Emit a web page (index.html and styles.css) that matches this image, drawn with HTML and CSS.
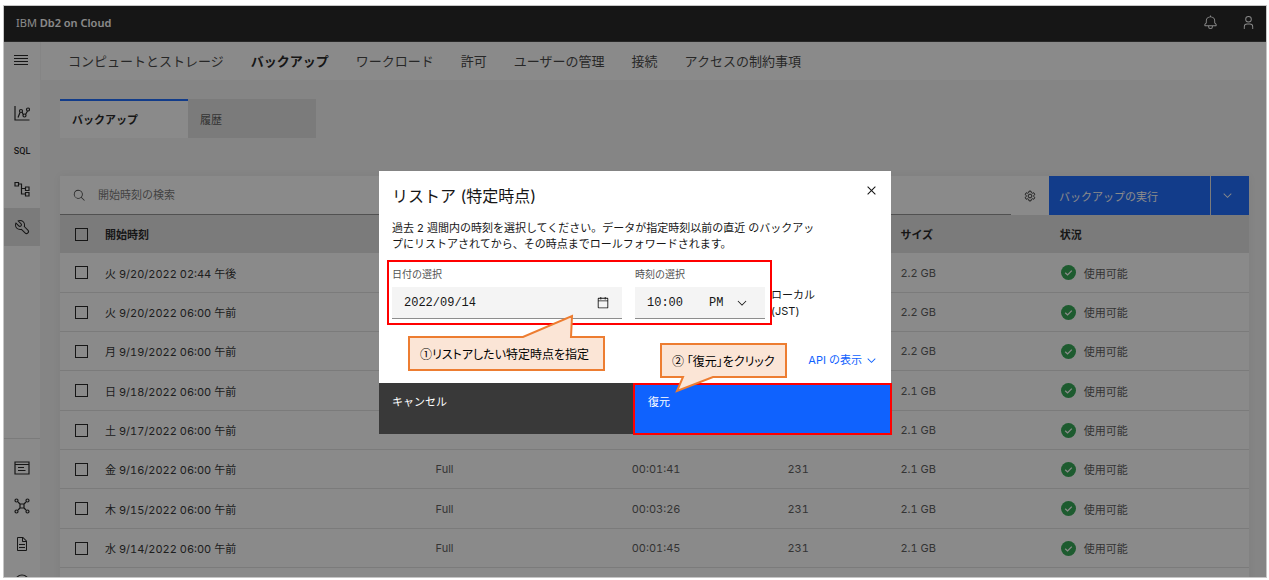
FILE: index.html
```html
<!DOCTYPE html>
<html lang="ja">
<head>
    <title>IBM Db2 on Cloud</title>
    <meta charset="utf-8">
    <link rel="stylesheet" href="styles.css">
</head>
<body>
    <div class="app">
        <header class="header">
            <div class="brand">IBM <b>Db2 on Cloud</b></div>
            <button class="header-btn" aria-label="通知">
                <svg viewBox="0 0 32 32"><path d="M28.7 19.3 26 16.6V13a10 10 0 0 0-9-9.95V1h-2v2.05A10 10 0 0 0 6 13v3.6l-2.7 2.7A1 1 0 0 0 3 20v3a1 1 0 0 0 1 1h7v.8a5.15 5.15 0 0 0 4.5 5.2A5 5 0 0 0 21 25v-1h7a1 1 0 0 0 1-1v-3a1 1 0 0 0-.3-.7zM19 25a3 3 0 0 1-6 0v-1h6zm8-3H5v-1.6l2.7-2.7A1 1 0 0 0 8 17v-4a8 8 0 0 1 16 0v4a1 1 0 0 0 .3.7l2.7 2.7z"/></svg>
            </button>
            <button class="header-btn" aria-label="ユーザー">
                <svg viewBox="0 0 32 32"><path d="M16 4a5 5 0 1 1-5 5 5 5 0 0 1 5-5m0-2a7 7 0 1 0 7 7 7 7 0 0 0-7-7zM26 30h-2v-5a5 5 0 0 0-5-5h-6a5 5 0 0 0-5 5v5H6v-5a7 7 0 0 1 7-7h6a7 7 0 0 1 7 7z"/></svg>
            </button>
        </header>

        <div class="body">
            <nav class="sidebar">
                <button class="menu-btn" aria-label="メニュー">
                    <svg viewBox="0 0 14 14"><path d="M0 1h14v1H0zM0 4h14v1H0zM0 7h14v1H0zM0 10h14v1H0z"/></svg>
                </button>
                <div class="side-group">
                    <a href="#" class="side-item" aria-label="モニター">
                        <svg class="line" viewBox="0 0 32 32"><path d="M2 2v28h29M8 25l4-10M16 14l3 6M23 19l4-7"/><circle cx="14" cy="12" r="3"/><circle cx="21" cy="21" r="3"/><circle cx="28" cy="9" r="3"/></svg>
                    </a>
                    <a href="#" class="side-item sql">SQL</a>
                    <a href="#" class="side-item" aria-label="データ">
                        <svg class="line" viewBox="0 0 32 32"><path d="M2 3h7v7H2zM9 6h6v20h8M15 15h8M23 12h7v7h-7zM23 23h7v7h-7z"/></svg>
                    </a>
                    <a href="#" class="side-item active" aria-label="管理">
                        <svg viewBox="0 0 32 32"><path d="M12.1 2a9.8 9.8 0 0 0-5.4 1.6l6.4 6.4a2.1 2.1 0 0 1 .2 3 2.1 2.1 0 0 1-3-.2L3.7 6.4A9.84 9.84 0 0 0 2 12.1a10.14 10.14 0 0 0 10.1 10.1 10.9 10.9 0 0 0 2.6-.3l6.7 6.7a5 5 0 0 0 7.1-7.1l-6.7-6.7a10.9 10.9 0 0 0 .3-2.6A10 10 0 0 0 12.1 2zm8 10.1a7.61 7.61 0 0 1-.3 2.1l-.3 1.1.8.8 6.7 6.7a2.88 2.88 0 0 1 .9 2.1A2.72 2.72 0 0 1 27 27a2.9 2.9 0 0 1-4.2 0l-6.7-6.7-.8-.8-1.1.3a7.61 7.61 0 0 1-2.1.3 8.27 8.27 0 0 1-5.7-2.3A7.63 7.63 0 0 1 4 12.1a8.33 8.33 0 0 1 .3-2.2l4.4 4.4a4.14 4.14 0 0 0 5.9.2 4.14 4.14 0 0 0-.2-5.9L10 4.2a6.45 6.45 0 0 1 2-.3 8.27 8.27 0 0 1 5.7 2.3 8.49 8.49 0 0 1 2.4 5.9z"/></svg>
                    </a>
                </div>
                <div class="side-group side-bottom">
                    <a href="#" class="side-item" aria-label="情報">
                        <svg class="line" viewBox="0 0 32 32"><path d="M2 4h28v24H2zM2 9h28M8 15h12M8 21h15"/></svg>
                    </a>
                    <a href="#" class="side-item" aria-label="接続">
                        <svg class="line" viewBox="0 0 32 32"><path d="M12 12h8v8h-8zM8 8l4 4M24 8l-4 4M8 24l4-4M24 24l-4-4"/><circle cx="5" cy="5" r="3"/><circle cx="27" cy="5" r="3"/><circle cx="5" cy="27" r="3"/><circle cx="27" cy="27" r="3"/></svg>
                    </a>
                    <a href="#" class="side-item" aria-label="資料">
                        <svg viewBox="0 0 32 32"><path d="m25.7 9.3-7-7A.9.9 0 0 0 18 2H8a2 2 0 0 0-2 2v24c0 1.1.9 2 2 2h16a2 2 0 0 0 2-2V10c0-.3-.1-.5-.3-.7zM18 4.4l5.6 5.6H18zM24 28H8V4h8v6c0 1.1.9 2 2 2h6zM10 22h12v2H10zM10 16h12v2H10z"/></svg>
                    </a>
                    <a href="#" class="side-item" aria-label="ヘルプ">
                        <svg class="line" viewBox="0 0 32 32"><circle cx="16" cy="16" r="14"/></svg>
                    </a>
                </div>
            </nav>

            <main class="main">
                <nav class="topnav">
                    <a href="#">コンピュートとストレージ</a>
                    <a href="#" class="current">バックアップ</a>
                    <a href="#">ワークロード</a>
                    <a href="#">許可</a>
                    <a href="#">ユーザーの管理</a>
                    <a href="#">接続</a>
                    <a href="#">アクセスの制約事項</a>
                </nav>
                <div class="content">
                    <div class="tabs">
                        <button class="tab selected">バックアップ</button>
                        <button class="tab">履歴</button>
                    </div>
                    <div class="panel">
                        <div class="toolbar">
                            <div class="search">
                                <svg viewBox="0 0 32 32"><path d="m29 27.6-7.55-7.57a11 11 0 1 0-1.42 1.42L27.6 29zM4 13a9 9 0 1 1 9 9 9 9 0 0 1-9-9z"/></svg>
                                <input type="text" placeholder="開始時刻の検索" aria-label="開始時刻の検索">
                            </div>
                            <button class="gear" aria-label="設定">
                                <svg class="line" viewBox="0 0 32 32"><path d="M13.3 3h5.4l.8 3.9 2.9 1.7 3.8-1.3 2.7 4.7-3 2.6v2.8l3 2.6-2.7 4.7-3.8-1.3-2.9 1.7-.8 3.9h-5.4l-.8-3.9-2.9-1.7-3.8 1.3L3.1 20l3-2.6v-2.8l-3-2.6 2.7-4.7 3.8 1.3 2.9-1.7z"/><circle cx="16" cy="16" r="5"/></svg>
                            </button>
                            <button class="run">バックアップの実行</button>
                            <button class="run-more" aria-label="その他">
                                <svg viewBox="0 0 32 32"><path d="M16 22 6 12l1.4-1.4 8.6 8.6 8.6-8.6L26 12z"/></svg>
                            </button>
                        </div>
                        <table class="backups">
                            <thead>
                                <tr>
                                    <th class="c-check"><input type="checkbox" aria-label="すべて選択"></th>
                                    <th class="c-start">開始時刻</th>
                                    <th class="c-type"></th>
                                    <th class="c-time"></th>
                                    <th class="c-id"></th>
                                    <th class="c-size">サイズ</th>
                                    <th>状況</th>
                                </tr>
                            </thead>
                            <tbody id="rows"></tbody>
                        </table>
                    </div>
                </div>
            </main>
        </div>

        <div class="overlay">
            <div class="modal" role="dialog" aria-labelledby="modalTitle">
                <div class="modal-body">
                    <div class="modal-head">
                        <h2 id="modalTitle">リストア (特定時点)</h2>
                        <button class="close" aria-label="閉じる">
                            <svg viewBox="0 0 32 32"><path d="M24 9.4 22.6 8 16 14.6 9.4 8 8 9.4l6.6 6.6L8 22.6 9.4 24l6.6-6.6 6.6 6.6 1.4-1.4-6.6-6.6z"/></svg>
                        </button>
                    </div>
                    <p class="desc">過去 2 週間内の時刻を選択してください。データが指定時刻以前の直近 のバックアッ<br>プにリストアされてから、その時点までロールフォワードされます。</p>
                    <div class="fields">
                        <div class="field date">
                            <label for="date">日付の選択</label>
                            <div class="box">
                                <input type="text" id="date" value="2022/09/14">
                                <svg viewBox="0 0 32 32"><path d="M26 4h-4V2h-2v2h-8V2h-2v2H6a2 2 0 0 0-2 2v20c0 1.1.9 2 2 2h20a2 2 0 0 0 2-2V6a2 2 0 0 0-2-2zm0 22H6V12h20zm0-16H6V6h4v2h2V6h8v2h2V6h4z"/></svg>
                            </div>
                        </div>
                        <div class="field time">
                            <label for="time">時刻の選択</label>
                            <div class="box">
                                <input type="text" id="time" value="10:00">
                                <select aria-label="AM/PM">
                                    <option>AM</option>
                                    <option selected>PM</option>
                                </select>
                                <svg viewBox="0 0 32 32"><path d="M16 22 6 12l1.4-1.4 8.6 8.6 8.6-8.6L26 12z"/></svg>
                            </div>
                        </div>
                        <div class="zone">ローカル<br>(JST)</div>
                    </div>
                    <a href="#" class="api">API の表示
                        <svg viewBox="0 0 32 32"><path d="M16 22 6 12l1.4-1.4 8.6 8.6 8.6-8.6L26 12z"/></svg>
                    </a>
                </div>
                <div class="modal-footer">
                    <button class="cancel">キャンセル</button>
                    <button class="restore">復元</button>
                </div>

                <!-- 手順の注釈 -->
                <div class="mark mark-fields"></div>
                <div class="mark mark-restore"></div>
                <div class="callout callout-1">
                    <svg viewBox="0 0 197 58"><path d="M1 23h114l49-21-1 21h33v33H1z"/></svg>
                    <span>①リストアしたい特定時点を指定</span>
                </div>
                <div class="callout callout-2">
                    <svg viewBox="0 0 127 52"><path d="M1 1h125v33H53L17 48l6-14H1z"/></svg>
                    <span>② 「復元」をクリック</span>
                </div>
            </div>
        </div>
    </div>

    <script>
        const rows = [
            ['火 9/20/2022 02:44 午後', '', '', '', '2.2 GB'],
            ['火 9/20/2022 06:00 午前', '', '', '', '2.2 GB'],
            ['月 9/19/2022 06:00 午前', '', '', '', '2.2 GB'],
            ['日 9/18/2022 06:00 午前', '', '', '', '2.1 GB'],
            ['土 9/17/2022 06:00 午前', '', '', '', '2.1 GB'],
            ['金 9/16/2022 06:00 午前', 'Full', '00:01:41', '231', '2.1 GB'],
            ['木 9/15/2022 06:00 午前', 'Full', '00:03:26', '231', '2.1 GB'],
            ['水 9/14/2022 06:00 午前', 'Full', '00:01:45', '231', '2.1 GB']
        ];
        const check = '<svg viewBox="0 0 16 16"><circle cx="8" cy="8" r="8"/><path d="M4.5 8.2 7 10.6l4.5-4.6"/></svg>';
        document.getElementById('rows').innerHTML = rows.map(r =>
            '<tr><td><input type="checkbox" aria-label="' + r[0] + '"></td>' +
            r.map(c => '<td>' + c + '</td>').join('') +
            '<td><div class="status">' + check + '使用可能</div></td></tr>'
        ).join('') + '<tr><td colspan="7"></td></tr>';
    </script>
</body>
</html>
```
FILE: styles.css
```css
* {
    box-sizing: border-box;
}
body {
    margin: 0;
    padding: 5px 2px 2px 3px;
    background: #fff;
    font-family: Inter, "Noto Sans CJK JP", sans-serif;
    font-size: 11px;
    color: #161616;
}
button, input, select {
    margin: 0;
    padding: 0;
    border: none;
    border-radius: 0;
    background: none;
    font: inherit;
    color: inherit;
    outline: none;
}
button {
    text-align: left;
    cursor: pointer;
}
a {
    color: inherit;
    text-decoration: none;
}
svg {
    display: block;
    width: 16px;
    height: 16px;
    fill: currentColor;
    flex-shrink: 0;
}
svg.line {
    fill: none;
    stroke: currentColor;
    stroke-width: 2.4;
}
.app {
    position: relative;
    display: flex;
    flex-direction: column;
    height: calc(100vh - 7px);
    border: 1px solid #c6c6c6;
    overflow: hidden;
}

/* ヘッダー */
.header {
    display: flex;
    align-items: center;
    flex: 0 0 36px;
    padding: 0 10px 2px 12px;
    background: #161616;
    border-bottom: 1px solid #393939;
    color: #fff;
}
.brand {
    flex: 1;
    font-family: "Noto Sans", sans-serif;
}
.brand b {
    font-weight: 600;
}
.header-btn {
    margin-left: 23px;
}
.header-btn svg {
    width: 15px;
    height: 15px;
}
.body {
    display: flex;
    flex: 1;
    min-height: 0;
}

/* サイドバー */
.sidebar {
    display: flex;
    flex-direction: column;
    flex: 0 0 37px;
    background: #fff;
    border-right: 1px solid #f4f4f4;
    color: #161616;
}
.menu-btn {
    display: flex;
    align-items: center;
    height: 38px;
    padding-left: 10px;
    margin-bottom: 14px;
}
.menu-btn svg {
    width: 14px;
    height: 14px;
}
.side-item {
    display: flex;
    align-items: center;
    justify-content: center;
    height: 38px;
}
.side-item svg {
    width: 16px;
    height: 16px;
}
.side-item.active {
    background: #e0e0e0;
}
.sql {
    font-family: Roboto, sans-serif;
    font-size: 9px;
    font-weight: 500;
}
.side-bottom {
    margin-top: auto;
    margin-bottom: -24px;
    padding-top: 10px;
    border-top: 1px solid #e0e0e0;
}

/* コンテンツ */
.main {
    flex: 1;
    min-width: 0;
    background: #f4f4f4;
}
.topnav {
    display: flex;
    align-items: center;
    gap: 27px;
    height: 38px;
    padding: 0 0 2px 27px;
    background: #fff;
    font-size: 13px;
    color: #393939;
}
.topnav .current {
    font-weight: 700;
    color: #161616;
}
.content {
    padding: 19px 17px 0 19px;
}
.tabs {
    display: flex;
    margin-bottom: 38px;
}
.tab {
    width: 128px;
    height: 39px;
    padding: 0 0 2px 12px;
    background: #e0e0e0;
    border-top: 2px solid #e0e0e0;
    color: #525252;
}
.tab.selected {
    background: #fff;
    border-top-color: #0f62fe;
    font-weight: 700;
    color: #161616;
}
.panel {
    background: #fff;
    box-shadow: 0 0 8px rgba(0, 0, 0, 0.06);
}
.toolbar {
    display: flex;
    height: 39px;
}
.search {
    display: flex;
    align-items: center;
    flex: 1;
    gap: 12px;
    padding-left: 13px;
    border-bottom: 1px solid #8d8d8d;
    color: #393939;
}
.search svg {
    width: 13px;
    height: 13px;
}
.search input {
    flex: 1;
}
.search input::placeholder {
    color: #6f6f6f;
}
.gear {
    width: 38px;
    padding-left: 13px;
}
.gear svg {
    width: 12px;
    height: 12px;
}
.run {
    width: 161px;
    padding-left: 10px;
    background: #0f62fe;
    color: #fff;
}
.run-more {
    width: 39px;
    padding-left: 10px;
    background: #0f62fe;
    border-left: 1px solid #e0e0e0;
    color: #fff;
}
.run-more svg {
    width: 13px;
    height: 13px;
}
.backups {
    width: 100%;
    table-layout: fixed;
    border-collapse: separate;
    border-spacing: 0;
    font-variant-numeric: tabular-nums;
}
.backups th {
    height: 38px;
    padding: 0;
    background: #e0e0e0;
    text-align: left;
    font-weight: 700;
}
.backups td {
    height: 39px;
    padding: 0;
    border-bottom: 1px solid #e0e0e0;
    color: #525252;
}
.backups tr:nth-child(3n+1) td {
    height: 40px;
}
.backups td:nth-child(2) {
    color: #262626;
}
.c-check {
    width: 45px;
}
.c-start {
    width: 27.8%;
}
.c-type {
    width: 16.5%;
}
.c-time {
    width: 13.1%;
}
.c-id {
    width: 9.5%;
}
.c-size {
    width: 13.4%;
}
.backups input {
    display: block;
    appearance: none;
    width: 13px;
    height: 13px;
    margin-left: 15px;
    border: 1px solid #161616;
}
.status {
    display: flex;
    align-items: center;
    gap: 8px;
    padding-left: 1px;
}
.status svg {
    width: 15px;
    height: 15px;
}
.status circle {
    fill: #24a148;
}
.status path {
    fill: none;
    stroke: #fff;
    stroke-width: 1.4;
}

/* モーダル */
.overlay {
    position: absolute;
    inset: 0;
    display: flex;
    align-items: flex-start;
    justify-content: center;
    padding-top: 165px;
    background: rgba(22, 22, 22, 0.5);
}
.modal {
    position: relative;
    width: 512px;
    background: #fff;
}
.modal-body {
    padding: 13px 13px 15px;
}
.modal-head {
    display: flex;
    justify-content: space-between;
    margin-bottom: 12px;
}
.modal-head h2 {
    margin: 0;
    font-size: 16px;
    font-weight: 400;
    line-height: 24px;
}
.close {
    height: 14px;
    margin-right: -2px;
}
.close svg {
    width: 17px;
    height: 17px;
    margin-top: -2px;
}
.desc {
    margin: 0 0 14px;
    line-height: 16px;
    white-space: nowrap;
}
.fields {
    display: flex;
    align-items: flex-end;
}
.field label {
    display: block;
    margin-bottom: 5px;
    font-size: 10px;
    line-height: 16px;
    color: #525252;
}
.field.date {
    width: 230px;
    margin-right: 13px;
}
.field.time {
    width: 130px;
    margin-right: 6px;
}
.box {
    display: flex;
    align-items: center;
    height: 32px;
    padding: 0 12px;
    background: #f4f4f4;
    border-bottom: 1px solid #8d8d8d;
    font-family: "Liberation Mono", monospace;
    font-size: 12px;
}
.box input {
    flex: 1;
    min-width: 0;
}
.box svg {
    width: 14px;
    height: 14px;
}
.time .box {
    padding-right: 16px;
}
.box select {
    appearance: none;
    width: 26px;
}
.zone {
    line-height: 16px;
}
.api {
    display: flex;
    align-items: center;
    justify-content: flex-end;
    gap: 3px;
    margin-top: 33px;
    line-height: 16px;
    color: #0f62fe;
}
.api svg {
    width: 13px;
    height: 13px;
}
.modal-footer {
    display: flex;
}
.modal-footer button {
    display: flex;
    flex: 1;
    height: 51px;
    padding: 11px 13px;
    line-height: 16px;
    color: #fff;
}
.cancel {
    background: #393939;
}
.restore {
    background: #0f62fe;
}

/* 注釈 */
.mark {
    position: absolute;
    border: 2px solid #f00;
}
.mark-fields {
    left: 8px;
    top: 89px;
    width: 385px;
    height: 65px;
}
.mark-restore {
    left: 254px;
    top: 212px;
    right: -1px;
    bottom: -1px;
}
.callout {
    position: absolute;
    font-family: "Noto Sans CJK JP", sans-serif;
    font-size: 12px;
    font-feature-settings: "palt";
    line-height: 35px;
    white-space: nowrap;
    color: #000;
}
.callout svg {
    position: absolute;
    top: 0;
    left: 0;
    width: 100%;
    height: 100%;
    fill: #fbe5d6;
    stroke: #ed7d31;
    stroke-width: 2;
}
.callout span {
    position: relative;
}
.callout-1 {
    left: 29px;
    top: 143px;
    width: 197px;
    height: 58px;
    padding: 22px 0 0 12px;
}
.callout-2 {
    left: 281px;
    top: 172px;
    width: 127px;
    height: 52px;
    padding-left: 12px;
}
```
